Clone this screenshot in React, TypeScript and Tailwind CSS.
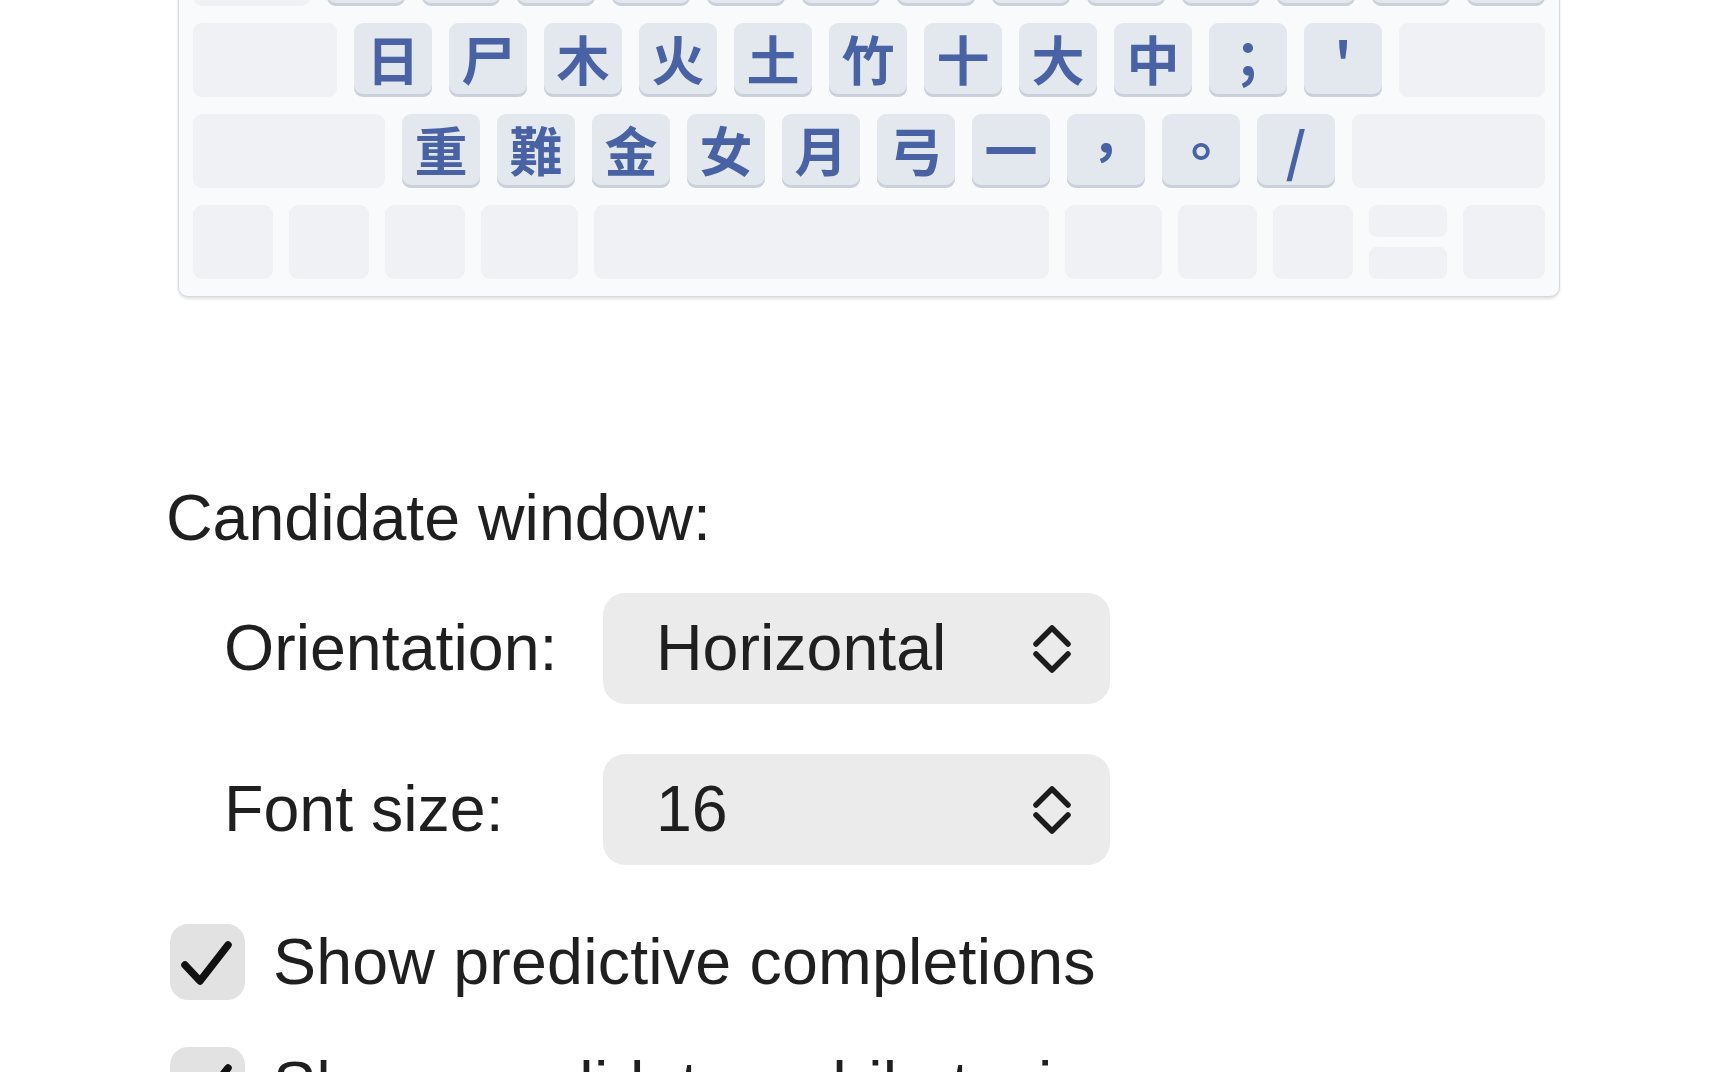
import React from 'react';

const homeRow = ['日', '尸', '木', '火', '土', '竹', '十', '大', '中', '；', "'"];
const bottomRow = ['重', '難', '金', '女', '月', '弓', '一', '，', '。', '/'];

const Key: React.FC<{ label?: string }> = ({ label }) => (
  <div className="w-[78px] h-[74px] shrink-0 rounded-[9px] bg-[#e3e8ef] shadow-[inset_0_-3px_0_#cbd1dc] flex items-center justify-center pb-[3px] text-[53px] font-bold leading-none text-[#4862a3] font-['Noto_Sans_CJK_TC','Noto_Sans_CJK_SC',sans-serif]">
    {label}
  </div>
);

const Blank: React.FC<{ className?: string }> = ({ className = '' }) => (
  <div className={`h-[74px] rounded-[9px] bg-[#eff1f4] ${className}`} />
);

const Chevrons = () => (
  <svg width="40" height="52" viewBox="0 0 40 52" fill="none" stroke="#1c1c1c" strokeWidth="5.5" strokeLinecap="round" strokeLinejoin="round">
    <polyline points="4,21 20,5 36,21" />
    <polyline points="4,31 20,47 36,31" />
  </svg>
);

const Check = () => (
  <svg width="75" height="76" viewBox="0 0 75 76" fill="none" stroke="#111" strokeWidth="7.5" strokeLinecap="round" strokeLinejoin="round">
    <polyline points="15,41 30,57 58,21" />
  </svg>
);

const SelectBox: React.FC<{ value: string }> = ({ value }) => (
  <div className="w-[507px] h-[111px] rounded-[22px] bg-[#ebebeb] flex items-center justify-between pl-[53px] pr-[38px]">
    <span>{value}</span>
    <Chevrons />
  </div>
);

const CheckRow: React.FC<{ label: string }> = ({ label }) => (
  <div className="flex items-center h-[76px] gap-[28px]">
    <div className="w-[75px] h-[76px] rounded-[18px] bg-[#e2e2e2] flex items-center justify-center">
      <Check />
    </div>
    <span className="whitespace-nowrap tracking-[0.2px]">{label}</span>
  </div>
);

const App: React.FC = () => {
  return (
    <div className="h-screen w-full bg-white overflow-hidden font-['Liberation_Sans',Arial,sans-serif] text-[#1f1f1f]">
      {/* Keyboard preview, top row scrolled out of view */}
      <div className="pl-[178px] w-[1560px]">
        <div className="mt-[-83px] rounded-[10px] border-[1.5px] border-[#d6d9de] bg-[#f9fafb] shadow-[0_2px_3px_rgba(0,0,0,0.12)] pt-[14px] px-[14px] pb-[17px] flex flex-col gap-[17px]">
          <div className="flex gap-[17px]">
            <Blank className="flex-1" />
            {Array.from({ length: 13 }).map((_, i) => <Key key={i} />)}
          </div>
          <div className="flex gap-[17px]">
            <Blank className="w-[144px]" />
            {homeRow.map((k) => <Key key={k} label={k} />)}
            <Blank className="flex-1" />
          </div>
          <div className="flex gap-[17px]">
            <Blank className="w-[192px]" />
            {bottomRow.map((k) => <Key key={k} label={k} />)}
            <Blank className="flex-1" />
          </div>
          <div className="flex gap-[16px]">
            <Blank className="w-[80px]" />
            <Blank className="w-[80px]" />
            <Blank className="w-[80px]" />
            <Blank className="w-[97px]" />
            <Blank className="w-[455px]" />
            <Blank className="w-[97px]" />
            <Blank className="w-[79px]" />
            <Blank className="w-[80px]" />
            <div className="w-[78px] h-[74px] flex flex-col gap-[10px]">
              <div className="h-[32px] rounded-[8px] bg-[#eff1f4]" />
              <div className="h-[32px] rounded-[8px] bg-[#eff1f4]" />
            </div>
            <Blank className="flex-1" />
          </div>
        </div>
      </div>

      {/* Candidate window options */}
      <div className="pl-[166px] pt-[189px] text-[64.5px] leading-none">
        <div className="h-[65px] flex items-center">Candidate window:</div>

        <div className="pl-[58px] mt-[42px] flex flex-col gap-[50px]">
          <div className="flex items-center">
            <span className="w-[379px]">Orientation:</span>
            <SelectBox value="Horizontal" />
          </div>
          <div className="flex items-center">
            <span className="w-[379px]">Font size:</span>
            <SelectBox value="16" />
          </div>
        </div>

        <div className="mt-[59px] pl-[4px] flex flex-col gap-[47px]">
          <CheckRow label="Show predictive completions" />
          <CheckRow label="Show candidates while typing" />
        </div>
      </div>
    </div>
  );
};

export default App;
